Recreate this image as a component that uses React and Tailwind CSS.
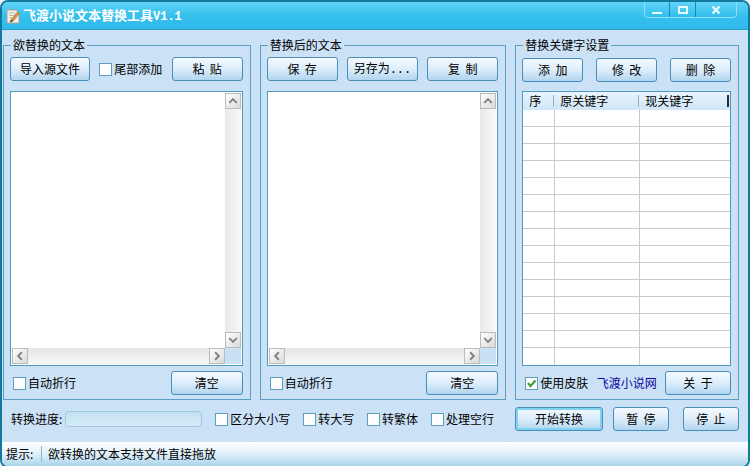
import React, { useState } from "react";
import clsx from "clsx";

function Button({ className, children }) {
  return (
    <button
      type="button"
      className={clsx(
        "h-6 rounded-[3px] border border-[#4a8fb9] bg-linear-to-b from-[#f4faff] via-[#ddedfb] to-[#b0d5ef] text-center leading-none whitespace-pre",
        className
      )}
    >
      {children}
    </button>
  );
}

function CheckBox({ label, defaultChecked }) {
  return (
    <label className="flex items-center gap-[2px] whitespace-nowrap">
      <span className="relative block h-[13px] w-[13px]">
        <input
          type="checkbox"
          defaultChecked={defaultChecked}
          className="peer block h-[13px] w-[13px] appearance-none border border-[#5a9fbd] bg-white"
        />
        <svg
          viewBox="0 0 13 13"
          className="pointer-events-none absolute inset-0 hidden h-[13px] w-[13px] peer-checked:block"
        >
          <path d="M3 6l2.5 3L10.500 3.500" fill="none" stroke="#4d9a3c" strokeWidth="2.200" />
        </svg>
      </span>
      {label}
    </label>
  );
}

function Group({ title, children }) {
  return (
    <fieldset className="flex min-w-0 flex-col border border-[#5b9fc4] pr-[7px] pb-1 pl-[6px]">
      <legend className="ml-px h-[14px] px-[2px] leading-[14px]">{title}</legend>
      {children}
    </fieldset>
  );
}

const arrows = {
  up: "M3.500 9.500l4-4 4 4",
  down: "M3.500 5.500l4 4 4-4",
  left: "M9.500 3.500l-4 4 4 4",
  right: "M5.500 3.500l4 4-4 4",
};

function ScrollButton({ direction }) {
  return (
    <button
      type="button"
      aria-label={direction}
      className="h-4 w-4 shrink-0 border border-[#b9bcbe] bg-linear-to-br from-white to-[#d9d9d9]"
    >
      <svg viewBox="0 0 15 15" className="h-[14px] w-[14px]">
        <path d={arrows[direction]} fill="none" stroke="#808080" strokeWidth="2" />
      </svg>
    </button>
  );
}

function TextPane({ label }) {
  const [text, setText] = useState("");
  return (
    <div className="mt-[10px] grid flex-1 grid-cols-[1fr_16px] grid-rows-[1fr_16px] border border-[#4f9bbf] bg-white p-px">
      <textarea
        aria-label={label}
        value={text}
        onChange={(e) => setText(e.target.value)}
        className="h-full w-full resize-none outline-none"
      />
      <div className="flex flex-col justify-between bg-linear-to-r from-[#e9e9e9] to-[#f8f8f8]">
        <ScrollButton direction="up" />
        <ScrollButton direction="down" />
      </div>
      <div className="flex justify-between bg-linear-to-b from-[#e6e6e6] to-[#f6f6f6]">
        <ScrollButton direction="left" />
        <ScrollButton direction="right" />
      </div>
      <div className="bg-[#c9e1f5]" />
    </div>
  );
}

function TitleBar() {
  return (
    <header className="flex h-7 items-start justify-between border-b border-[#2a9dcc] bg-linear-to-b from-[#5fd3f6] via-[#35c0ed] to-[#2fb9ec]">
      <div className="flex h-7 items-center gap-[3px] pl-1">
        <svg viewBox="0 0 14 16" className="h-4 w-[14px]">
          <path d="M1 2h9l3 3v10H1z" fill="#f3f1ea" stroke="#a9a496" />
          <path d="M3 5h6M3 7.500h6M3 10h4" stroke="#b9b9b5" />
          <path d="M5 12l6.500-8 2 1.500L7 13l-3 1z" fill="#e39a3b" stroke="#8c5a22" strokeWidth=".6" />
          <path d="M4 14l1-2 2 1z" fill="#4a3620" />
        </svg>
        <h1 className="text-[13px] font-bold text-white">
          飞渡小说文本替换工具
          <span className="font-['Liberation_Mono',monospace] text-xs">V1.1</span>
        </h1>
      </div>
      <div className="mr-[11px] flex h-4 divide-x divide-[#1787b5] rounded-b border border-t-0 border-[#8fe0f8]">
        <button type="button" aria-label="最小化" className="flex w-[25px] items-center justify-center">
          <svg viewBox="0 0 12 10" className="h-[10px] w-3">
            <path d="M1 8h10" stroke="#e2fbff" strokeWidth="2" />
          </svg>
        </button>
        <button type="button" aria-label="最大化" className="flex w-[26px] items-center justify-center">
          <svg viewBox="0 0 12 10" className="h-[10px] w-3">
            <path d="M2 2h8v6H2z" fill="none" stroke="#e2fbff" strokeWidth="2" />
          </svg>
        </button>
        <button type="button" aria-label="关闭" className="flex w-10 items-center justify-center">
          <svg viewBox="0 0 12 10" className="h-[10px] w-3">
            <path d="M2.500 1.500l7 7M9.500 1.500l-7 7" stroke="#e2fbff" strokeWidth="2.400" />
          </svg>
        </button>
      </div>
    </header>
  );
}

function KeywordTable() {
  const rows = Array.from({ length: 15 });
  return (
    <div className="mt-[9px] flex-1 border border-[#4f9bbf] bg-white">
      <table className="w-full table-fixed border-separate border-spacing-0">
        <thead>
          <tr className="h-[18px] bg-linear-to-b from-[#e9f4fd] to-[#cfe5f7] text-left leading-none">
            <th className="w-8 p-0 font-normal">
              <div className="mr-px border-r border-[#8bb4cd] pl-[6px]">序</div>
            </th>
            <th className="w-[85px] p-0 font-normal">
              <div className="mr-px border-r border-[#8bb4cd] pl-[5px]">原关键字</div>
            </th>
            <th className="p-0 font-normal">
              <div className="mr-px border-r-2 border-[#24303a] pl-[5px]">现关键字</div>
            </th>
          </tr>
        </thead>
        <tbody>
          {rows.map((_, i) => (
            <tr key={i} className="group h-[17px]">
              <td className="border-r border-b border-[#c9cccd] p-0 group-last:border-b-0"></td>
              <td className="border-r border-b border-[#c9cccd] p-0 group-last:border-b-0"></td>
              <td className="border-b border-[#c9cccd] p-0 group-last:border-b-0"></td>
            </tr>
          ))}
        </tbody>
      </table>
    </div>
  );
}

export default function App() {
  return (
    <div className="bg-[#e8f3fa]">
      <div className="flex min-h-screen flex-col overflow-hidden rounded-lg border-2 border-[#12799d] bg-[#cbe1f5] font-['Noto_Sans_CJK_SC',sans-serif] text-xs leading-4 text-black">
        <TitleBar />
        <main className="flex flex-1 flex-col pt-2 pr-[9px] pl-px">
          <div className="grid flex-1 grid-cols-[248fr_247fr_224fr] gap-[9px]">
            <Group title="欲替换的文本">
              <div className="mt-[5px] flex items-center justify-between">
                <Button className="w-20">导入源文件</Button>
                <CheckBox label="尾部添加" />
                <Button className="w-[71px]">粘  贴</Button>
              </div>
              <TextPane label="欲替换的文本" />
              <div className="mt-[5px] flex items-center justify-between pl-[3px]">
                <CheckBox label="自动折行" />
                <Button className="w-[72px]">清空</Button>
              </div>
            </Group>
            <Group title="替换后的文本">
              <div className="mt-[5px] flex items-center justify-between">
                <Button className="w-[71px]">保  存</Button>
                <Button className="w-[71px]">
                  另存为<span className="font-['Liberation_Mono',monospace]">...</span>
                </Button>
                <Button className="w-[71px]">复  制</Button>
              </div>
              <TextPane label="替换后的文本" />
              <div className="mt-[5px] flex items-center justify-between pl-[3px]">
                <CheckBox label="自动折行" />
                <Button className="w-[72px]">清空</Button>
              </div>
            </Group>
            <Group title="替换关键字设置">
              <div className="mt-[6px] flex items-center justify-between">
                <Button className="w-[61px]">添  加</Button>
                <Button className="w-[61px]">修  改</Button>
                <Button className="w-[61px]">删  除</Button>
              </div>
              <KeywordTable />
              <div className="mt-[5px] flex items-center justify-between pl-[3px]">
                <CheckBox label="使用皮肤" defaultChecked />
                <a href="#" className="text-[#0a0aa0]">飞渡小说网</a>
                <Button className="w-[66px]">关  于</Button>
              </div>
            </Group>
          </div>
          <div className="flex h-[42px] items-center justify-between pb-1 pl-2">
            <div className="flex items-center gap-[3px]">
              <span id="progress">转换进度:</span>
              <div
                role="progressbar"
                aria-labelledby="progress"
                aria-valuenow={0}
                className="h-4 w-[137px] rounded border border-[#9dc9dd] bg-linear-to-b from-[#c3e0f1] to-[#d5edf8]"
              />
            </div>
            <CheckBox label="区分大小写" />
            <CheckBox label="转大写" />
            <CheckBox label="转繁体" />
            <CheckBox label="处理空行" />
            <div className="flex pl-2">
              <Button className="mr-[10px] w-[88px] border-[#2f86b0] inset-ring-2 inset-ring-[#7fd2f0]">
                开始转换
              </Button>
              <Button className="mr-[14px] w-14">暂  停</Button>
              <Button className="w-14">停  止</Button>
            </div>
          </div>
        </main>
        <footer className="flex h-6 items-center bg-linear-to-b from-white via-[#e0f0fa] to-[#a9d4ec] pl-1">
          <span className="w-[35px]">提示:</span>
          <span className="border-l border-[#8bb9d2] pl-[6px]">欲转换的文本支持文件直接拖放</span>
        </footer>
      </div>
    </div>
  );
}
